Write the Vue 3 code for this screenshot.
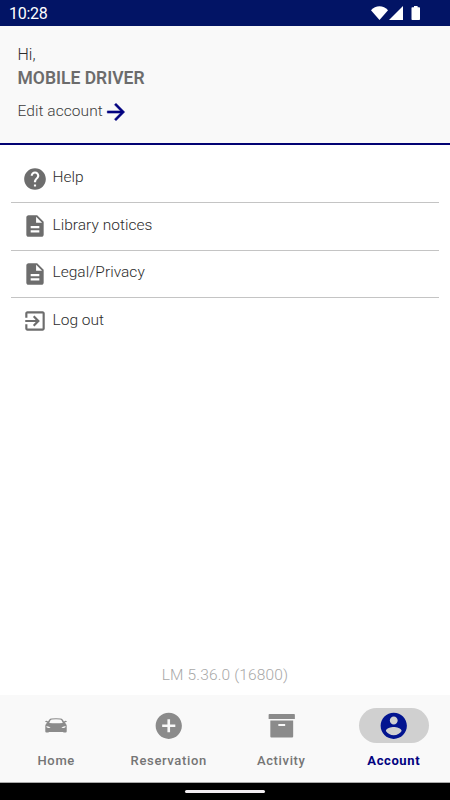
<template>
  <div class="screen">
    <div class="status">
      <span class="time">10:28</span>
      <svg class="signals" width="50" height="14" viewBox="0 0 50 14">
        <path d="M8.500 14 L0 4.200 C4.500 -1 12.500 -1 17 4.200 Z" />
        <path d="M32 0 V14 H18 Z" />
        <path d="M43 0h3.600v1.300h1.600q.8 0 .8.8v11.100q0 .8-.8.8h-6.900q-.8 0-.8-.8V2.100q0-.8.8-.8H43z" />
      </svg>
    </div>

    <header class="head">
      <div class="hi">Hi,</div>
      <div class="name">MOBILE DRIVER</div>
      <div class="edit">
        <span class="edit-text">Edit account</span>
        <svg width="26" height="26" viewBox="0 0 24 24">
          <path d="M12 4l-1.410 1.410L16.170 11H4v2h12.170l-5.580 5.590L12 20l8-8z" />
        </svg>
      </div>
    </header>

    <main class="body">
      <ul class="menu">
        <li v-for="item in items" :key="item.label" class="row">
          <svg class="row-icon" viewBox="0 0 24 24"><path :d="icons[item.icon]" /></svg>
          <span class="row-text">{{ item.label }}</span>
        </li>
      </ul>
      <div class="version">LM 5.36.0 (16800)</div>
    </main>

    <nav class="tabs">
      <button
        v-for="tab in tabs"
        :key="tab.id"
        :class="['tab', { active: current === tab.id }]"
        @click="current = tab.id"
      >
        <span class="pill flex-c">
          <svg v-if="tab.id === 'home'" width="24" height="16" viewBox="0 0 24 16">
            <path
              fill-rule="evenodd"
              d="M1 3.300Q2.500 2.200 4 3.400L5.200 1.700Q6 .7 7.500.6Q12 .1 16.500.6Q18 .7 18.800 1.700L20 3.400Q21.500 2.200 23 3.300Q22.800 4.400 20.700 4.500Q22.500 5.800 22.700 7.500V13.500Q22.700 14.500 21.700 14.500H20.200Q19.200 14.500 19.200 13.900H4.800Q4.800 14.500 3.800 14.500H2.300Q1.300 14.500 1.300 13.500V7.500Q1.500 5.800 3.300 4.500Q1.200 4.400 1 3.300ZM5.200 4.900Q12 5.700 18.800 4.900L17.500 2.300Q17 1.500 16 1.400Q12 1 8 1.400Q7 1.500 6.500 2.300ZM2.300 8Q2.300 9.800 4.300 10L6.600 10Q5.800 8.600 2.300 8ZM21.700 8Q21.700 9.800 19.700 10L17.400 10Q18.200 8.600 21.700 8Z"
            />
          </svg>
          <svg v-else class="tab-icon" viewBox="0 0 24 24">
            <path fill-rule="evenodd" :d="icons[tab.icon]" />
          </svg>
        </span>
        <span class="tab-text">{{ tab.label }}</span>
      </button>
    </nav>

    <div class="sysbar flex-c"><span class="handle"></span></div>
  </div>
</template>

<script setup>
import { ref } from 'vue'

const current = ref('account')

const items = [
  { label: 'Help', icon: 'help' },
  { label: 'Library notices', icon: 'doc' },
  { label: 'Legal/Privacy', icon: 'doc' },
  { label: 'Log out', icon: 'exit' }
]

const tabs = [
  { id: 'home', label: 'Home' },
  { id: 'reservation', label: 'Reservation', icon: 'add' },
  { id: 'activity', label: 'Activity', icon: 'archive' },
  { id: 'account', label: 'Account', icon: 'user' }
]

const icons = {
  help: 'M12 2C6.480 2 2 6.480 2 12s4.480 10 10 10 10-4.480 10-10S17.520 2 12 2zm1 17h-2v-2h2v2zm2.070-7.750l-.9.920C13.450 12.900 13 13.500 13 15h-2v-.5c0-1.100.450-2.100 1.170-2.830l1.240-1.260c.370-.360.590-.860.590-1.410 0-1.100-.9-2-2-2s-2 .9-2 2H8c0-2.210 1.790-4 4-4s4 1.790 4 4c0 .880-.360 1.680-.930 2.250z',
  doc: 'M14 2H6c-1.100 0-1.990.9-1.990 2L4 20c0 1.100.890 2 1.990 2H18c1.100 0 2-.9 2-2V8l-6-6zm2 16H8v-2h8v2zm0-4H8v-2h8v2zm-3-5V3.500L18.500 9H13z',
  exit: 'M10.090 15.590L11.500 17l5-5-5-5-1.410 1.410L12.670 11H3v2h9.670l-2.580 2.590zM19 3H5c-1.110 0-2 .9-2 2v4h2V5h14v14H5v-4H3v4c0 1.100.890 2 2 2h14c1.100 0 2-.9 2-2V5c0-1.100-.9-2-2-2z',
  add: 'M12 2C6.480 2 2 6.480 2 12s4.480 10 10 10 10-4.480 10-10S17.520 2 12 2zm5 11h-4v4h-2v-4H7v-2h4V7h2v4h4v2z',
  archive: 'M2.600 3H21.400Q22 3 22 3.600V6.900H2V3.600Q2 3 2.600 3ZM3.300 8H20.700V20.200Q20.700 21 19.900 21H4.100Q3.300 21 3.300 20.200ZM9.400 10.600V12.100H14.600V10.600Z',
  user: 'M12 2C6.480 2 2 6.480 2 12s4.480 10 10 10 10-4.480 10-10S17.520 2 12 2zm0 3c1.660 0 3 1.340 3 3s-1.340 3-3 3-3-1.340-3-3 1.340-3 3-3zm0 14.200c-2.500 0-4.710-1.280-6-3.220.030-1.990 4-3.080 6-3.080 1.990 0 5.970 1.090 6 3.080-1.290 1.940-3.500 3.220-6 3.220z'
}
</script>

<style>
body { background: #fff; }
</style>

<style scoped>
.screen {
  width: 450px;
  height: 800px;
  display: flex;
  flex-direction: column;
  overflow: hidden;
  background: #fff;
  font-family: Roboto, sans-serif;
  color: #2c2c2c;
}

.flex-c {
  display: flex;
  align-items: center;
  justify-content: center;
}

.status {
  height: 26px;
  flex: none;
  box-sizing: border-box;
  padding: 0 29px 0 9px;
  display: flex;
  align-items: center;
  justify-content: space-between;
  background: #021465;
  color: #fff;
}
.time {
  font-size: 16px;
  line-height: 26px;
  padding-top: 2px;
  letter-spacing: -.3px;
}
.signals { fill: #fff; }

.head {
  height: 119px;
  flex: none;
  box-sizing: border-box;
  padding: 19px 17.500px 0;
  background: #f9f9f9;
  border-bottom: 2px solid #020273;
}
.hi {
  font-size: 16px;
  line-height: 20px;
  font-weight: 300;
}
.name {
  font-size: 17.500px;
  line-height: 23px;
  font-weight: 600;
  padding-top: 2px;
  color: #6c6c6c;
}
.edit {
  display: flex;
  align-items: flex-start;
  padding-top: 9px;
  font-size: 15.500px;
  line-height: 22px;
  font-weight: 300;
  letter-spacing: .06px;
  color: #3c3c3c;
}
.edit-text { padding-top: 1px; }
.edit svg { fill: #020280; stroke: #020280; stroke-width: .5; }

.body {
  flex: 1;
  min-height: 0;
  display: flex;
  flex-direction: column;
  justify-content: space-between;
}
.menu { list-style: none; margin: 0; padding: 10.500px 11px 0; }
.row {
  height: 47.500px;
  box-sizing: border-box;
  padding-left: 11px;
  display: flex;
  align-items: center;
  border-bottom: 1.500px solid #c4c4c4;
}
.row:last-child { border-bottom-color: transparent; }
.row-icon { width: 26px; height: 26px; fill: #6d6d6d; }
.row-text {
  font-size: 15.500px;
  line-height: 20px;
  font-weight: 300;
  letter-spacing: .02px;
  padding: 0 0 3px 4.500px;
}

.version {
  text-align: center;
  font-size: 15.500px;
  line-height: 20px;
  font-weight: 300;
  letter-spacing: .15px;
  padding-bottom: 10px;
  color: #a8a8a8;
}

.tabs {
  height: 88px;
  flex: none;
  box-sizing: border-box;
  display: grid;
  grid-template-columns: repeat(4, 1fr);
  background: #f9f9f9;
  border-bottom: 1px solid #aaa;
}
.tab {
  display: flex;
  flex-direction: column;
  align-items: center;
  gap: 9px;
  padding: 13px 0 0;
  border: none;
  background: none;
  font-family: inherit;
  color: #757575;
  cursor: pointer;
}
.pill { width: 70px; height: 35px; border-radius: 18px; }
.pill svg { fill: #8b8b8b; }
.tab-icon { width: 31.500px; height: 31.500px; }
.tab-text {
  font-size: 13px;
  line-height: 18px;
  font-weight: 500;
  letter-spacing: .65px;
}
.tab.active { color: #020280; }
.tab.active .pill { background: #d0d0d0; }
.tab.active .pill svg { fill: #021490; }
.tab.active .tab-text { font-weight: 700; letter-spacing: .6px; }

.sysbar { height: 17px; flex: none; background: #000; }
.handle { width: 80px; height: 2.500px; border-radius: 2px; background: #f2eef2; }
</style>
